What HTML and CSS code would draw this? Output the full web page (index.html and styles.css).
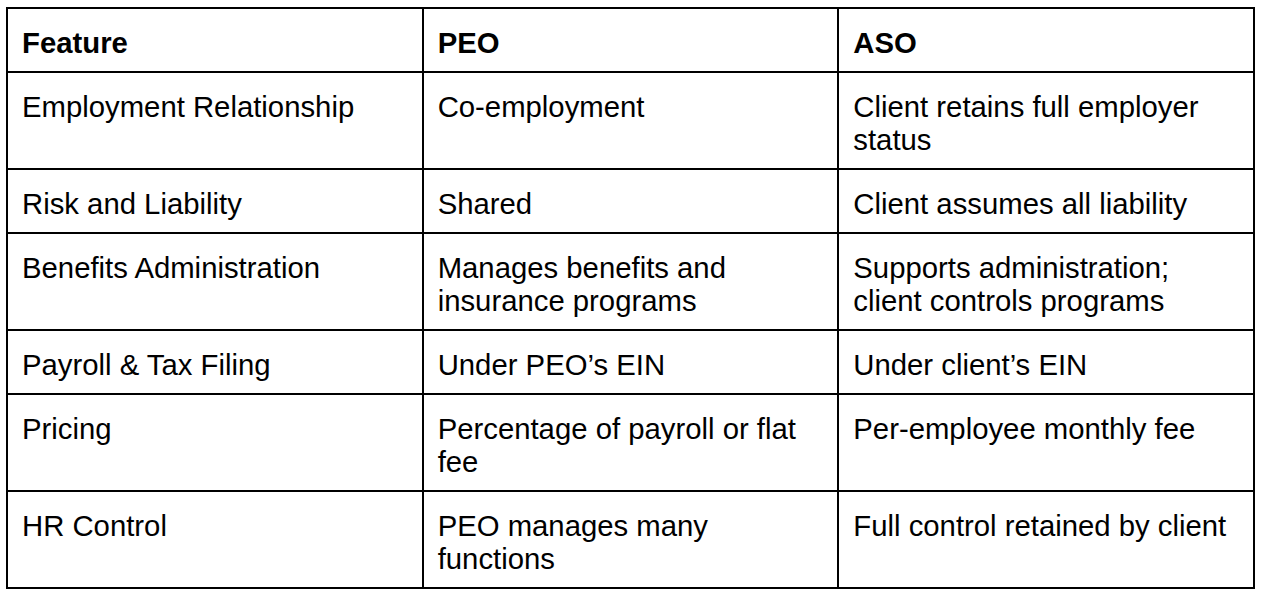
FILE: index.html
```html
<!DOCTYPE html>
<html>
<head>
<meta charset="utf-8">
<link rel="stylesheet" href="styles.css">
</head>
<body>
<table class="cmp">
  <colgroup><col class="c"><col class="c"><col class="c"></colgroup>
  <thead>
    <tr><th>Feature</th><th>PEO</th><th>ASO</th></tr>
  </thead>
  <tbody>
    <tr><td>Employment Relationship</td><td>Co-employment</td><td>Client retains full employer status</td></tr>
    <tr><td>Risk and Liability</td><td>Shared</td><td>Client assumes all liability</td></tr>
    <tr><td>Benefits Administration</td><td>Manages benefits and insurance programs</td><td>Supports administration; client controls programs</td></tr>
    <tr><td>Payroll &amp; Tax Filing</td><td>Under PEO’s EIN</td><td>Under client’s EIN</td></tr>
    <tr><td>Pricing</td><td>Percentage of payroll or flat fee</td><td>Per-employee monthly fee</td></tr>
    <tr><td>HR Control</td><td>PEO manages many functions</td><td>Full control retained by client</td></tr>
  </tbody>
</table>
</body>
</html>
```
FILE: styles.css
```css
html, body {
  margin: 0;
  padding: 0;
  background: #fff;
}
body {
  padding: 7px 0 0 6px;
  font-family: "Liberation Sans", Arial, sans-serif;
  color: #000;
}
.cmp {
  border-collapse: collapse;
  table-layout: fixed;
  width: 1249px;
  font-size: 29.3px;
  line-height: 33px;
}
.cmp th, .cmp td {
  border: 2px solid #000;
  padding: 17px 14px 12px 14px;
  text-align: left;
  vertical-align: top;
}
.cmp th {
  font-weight: bold;
}
```
